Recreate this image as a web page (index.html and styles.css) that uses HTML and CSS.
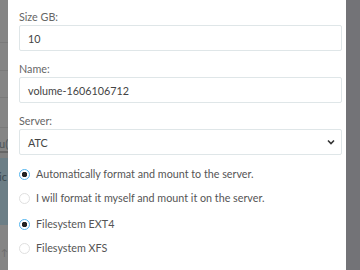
FILE: index.html
```html
<!DOCTYPE html>
<html>
<head>
<meta charset="utf-8">
<link rel="stylesheet" href="styles.css">
</head>
<body>
<div class="screen">
  <div class="backdrop-left">
    <div class="bg-row r1"></div>
    <div class="bg-row r2"></div>
    <div class="bg-row r2b"></div>
    <div class="bg-row r2c"></div>
    <div class="bg-row r3"><span class="bg-text">u(</span></div>
    <div class="bg-row r4"><span class="bg-text">ic</span></div>
    <div class="bg-row r5"><span class="bg-text">↑</span></div>
  </div>
  <div class="modal">
    <div class="field">
      <label class="label">Size GB:</label>
      <div class="input">10</div>
    </div>
    <div class="field">
      <label class="label">Name:</label>
      <div class="input">volume-1606106712</div>
    </div>
    <div class="field">
      <label class="label">Server:</label>
      <div class="input select">
        <span>ATC</span>
        <svg class="chev" width="8" height="6" viewBox="0 0 8 6"><path d="M1 1.5 L4 4.5 L7 1.5" fill="none" stroke="#333" stroke-width="1.6"/></svg>
      </div>
    </div>
    <div class="radios">
      <div class="radio-row"><span class="radio on"></span><span>Automatically format and mount to the server.</span></div>
      <div class="radio-row"><span class="radio"></span><span>I will format it myself and mount it on the server.</span></div>
    </div>
    <div class="radios second">
      <div class="radio-row"><span class="radio on"></span><span>Filesystem EXT4</span></div>
      <div class="radio-row"><span class="radio"></span><span>Filesystem XFS</span></div>
    </div>
  </div>
  <div class="backdrop-right"></div>
</div>
</body>
</html>
```
FILE: styles.css
```css
html, body {
  margin: 0;
  padding: 0;
  width: 360px;
  height: 270px;
  overflow: hidden;
  font-family: "Lato", "Open Sans", sans-serif;
}
.screen {
  display: flex;
  height: 270px;
}
.backdrop-left {
  width: 8px;
  background: #858585;
  display: flex;
  flex-direction: column;
  overflow: hidden;
}
.bg-row {
  border-bottom: 1px solid #7a7a7a;
  position: relative;
  overflow: hidden;
  box-sizing: border-box;
}
.r1 { height: 43px; }
.r2 { height: 28px; }
.r2b { height: 27px; }
.r2c { height: 30px; }
.r3 { height: 25px; border-bottom: 2px solid #666; }
.r4 { height: 72px; background: #6c7e86; border-top: 5px solid #808080; border-bottom: none; }
.r5 { flex: 1; border-bottom: none; }
.bg-text {
  position: absolute;
  left: -1px;
  bottom: 1px;
  font-size: 11px;
  color: #4a5458;
}
.r4 .bg-text { top: 12px; bottom: auto; color: #3c4a50; }
.r5 .bg-text { top: 22px; bottom: auto; left: 1px; color: #6a6a6a; font-size: 9px; }
.backdrop-right {
  flex: 1;
  background: #737377;
}
.modal {
  width: 338px;
  background: #fff;
  box-sizing: border-box;
  padding: 11px 4px 0 11px;
}
.field {
  margin-bottom: 12px;
}
.label {
  display: block;
  font-size: 10.75px;
  color: #666;
  line-height: 12px;
  margin-bottom: 2px;
}
.input {
  height: 26px;
  box-sizing: border-box;
  border: 1px solid #dfe6e8;
  border-radius: 2px;
  padding: 0 8px;
  display: flex;
  align-items: center;
  font-size: 10.75px;
  color: #444;
}
.select {
  justify-content: space-between;
  padding-right: 6px;
}
.radios {
  margin-top: 12px;
  display: flex;
  flex-direction: column;
  gap: 10px;
}
.radio-row {
  display: flex;
  align-items: center;
  gap: 6px;
  font-size: 10.75px;
  color: #555;
  line-height: 14px;
}
.radio {
  width: 11px;
  height: 11px;
  box-sizing: border-box;
  border-radius: 50%;
  border: 1px solid #e0e0e0;
  background: #fff;
  flex: none;
}
.radio.on {
  border: 1.5px solid #55b6ef;
  background: radial-gradient(circle, #222 0 2.5px, #fff 3px);
}
```
